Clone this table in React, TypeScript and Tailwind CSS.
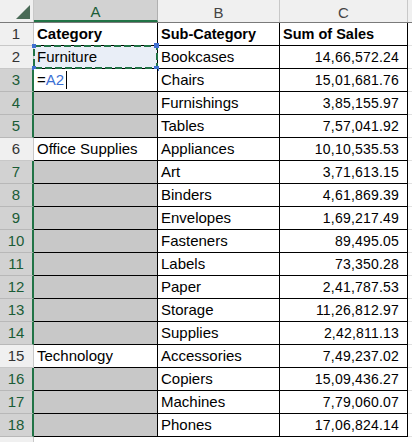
import React from "react";

type R = { n: number; a: string; b: string; c: string; kind: "head" | "val" | "blank" | "src" | "edit" };

const rows: R[] = [
  { n: 1, a: "Category", b: "Sub-Category", c: "Sum of Sales", kind: "head" },
  { n: 2, a: "Furniture", b: "Bookcases", c: "14,66,572.24", kind: "src" },
  { n: 3, a: "", b: "Chairs", c: "15,01,681.76", kind: "edit" },
  { n: 4, a: "", b: "Furnishings", c: "3,85,155.97", kind: "blank" },
  { n: 5, a: "", b: "Tables", c: "7,57,041.92", kind: "blank" },
  { n: 6, a: "Office Supplies", b: "Appliances", c: "10,10,535.53", kind: "val" },
  { n: 7, a: "", b: "Art", c: "3,71,613.15", kind: "blank" },
  { n: 8, a: "", b: "Binders", c: "4,61,869.39", kind: "blank" },
  { n: 9, a: "", b: "Envelopes", c: "1,69,217.49", kind: "blank" },
  { n: 10, a: "", b: "Fasteners", c: "89,495.05", kind: "blank" },
  { n: 11, a: "", b: "Labels", c: "73,350.28", kind: "blank" },
  { n: 12, a: "", b: "Paper", c: "2,41,787.53", kind: "blank" },
  { n: 13, a: "", b: "Storage", c: "11,26,812.97", kind: "blank" },
  { n: 14, a: "", b: "Supplies", c: "2,42,811.13", kind: "blank" },
  { n: 15, a: "Technology", b: "Accessories", c: "7,49,237.02", kind: "val" },
  { n: 16, a: "", b: "Copiers", c: "15,09,436.27", kind: "blank" },
  { n: 17, a: "", b: "Machines", c: "7,79,060.07", kind: "blank" },
  { n: 18, a: "", b: "Phones", c: "17,06,824.14", kind: "blank" },
];

function Corner({ x, y, s }: { x: number; y: number; s: number }) {
  return <div className="absolute bg-[#3f6fd0]" style={{ left: x, top: y, width: s, height: s }} />;
}

export default function App() {
  return (
    <div className="w-[412px] h-[442px] bg-white overflow-hidden relative font-['Liberation_Sans',Arial,sans-serif] text-black">
      {/* column header */}
      <div className="flex h-[23px] bg-[#f0f0f0] border-b border-[#7a7a7a]">
        <div className="w-[34px] h-full border-r border-[#c8c8c8] relative">
          <svg className="absolute left-0 top-0" width="34" height="22">
            <polygon points="30,5 30,19 16,19" fill="#4a6b57" />
          </svg>
        </div>
        <div className="w-[124px] h-full bg-[#d2d2d2] border-r border-[#b0b0b0] border-b-2 border-b-[#217346] flex justify-center items-center text-[15px] text-[#1a5c36] leading-none pt-[2px]">
          A
        </div>
        <div className="w-[122px] h-full border-r border-[#c8c8c8] flex justify-center items-center text-[15px] text-[#444] leading-none pt-[2px]">
          B
        </div>
        <div className="w-[128px] h-full border-r border-[#c8c8c8] flex justify-center items-center text-[15px] text-[#444] leading-none pt-[2px]">
          C
        </div>
        <div className="flex-1 h-full" />
      </div>
      {rows.map((r) => {
        const sel = r.kind === "blank" || r.kind === "edit";
        return (
          <div key={r.n} className="flex h-[23px]">
            <div
              className={
                sel
                  ? "w-[34px] h-full bg-[#d2d2d2] border-r-2 border-r-[#217346] border-b border-b-[#b8b8b8] flex justify-center items-center text-[15px] text-[#1a5c36] leading-[22px]"
                  : "w-[34px] h-full bg-[#f0f0f0] border-r border-r-[#c8c8c8] pr-px border-b border-b-[#c8c8c8] flex justify-center items-center text-[15px] text-[#333] leading-[22px]"
              }
            >
              {r.n}
            </div>
            <div
              className={
                "w-[124px] h-full border-r border-b border-black relative text-[15px] leading-[22px] pl-[3px] whitespace-nowrap " +
                (r.kind === "blank" ? "bg-[#c8c8c8]" : r.kind === "src" ? "bg-[#e9eef7]" : "bg-white") +
                (r.kind === "head" ? " font-bold text-[14.5px]" : "")
              }
            >
              {r.kind === "edit" ? (
                <span>
                  =<span className="text-[#3b6fd4]">A2</span>
                  <span className="inline-block w-px h-[18px] bg-black align-[-4px] ml-[2px]" />
                </span>
              ) : (
                r.a
              )}
              {r.kind === "src" && (
                <>
                  <svg className="absolute left-[-1px] top-[-1px]" width="126" height="25">
                    <rect x="1" y="1" width="123" height="22" fill="none" stroke="#217346" strokeWidth="2" strokeDasharray="7 3" />
                  </svg>
                  <Corner x={-2} y={-2} s={4} />
                  <Corner x={120} y={-3} s={5} />
                  <Corner x={-2} y={20} s={4} />
                  <Corner x={120} y={20} s={5} />
                </>
              )}
            </div>
            <div
              className={
                "w-[122px] h-full border-r border-b border-black leading-[22px] pl-[3px] whitespace-nowrap " +
                (r.kind === "head" ? "font-bold text-[14.5px]" : "text-[15px]")
              }
            >
              {r.b}
            </div>
            <div
              className={
                "w-[128px] h-full border-r border-b border-black leading-[22px] whitespace-nowrap " +
                (r.kind === "head" ? "font-bold text-[14.5px] pl-[3px]" : "text-[14px] text-right pr-[8px] tracking-[0.2px]")
              }
            >
              {r.c}
            </div>
            <div className="flex-1 h-full border-b border-[#e1e1e1]" />
          </div>
        );
      })}
      <div className="flex h-[10px]">
        <div className="w-[34px] h-full bg-[#f0f0f0] border-r border-[#c8c8c8]" />
      </div>
    </div>
  );
}
